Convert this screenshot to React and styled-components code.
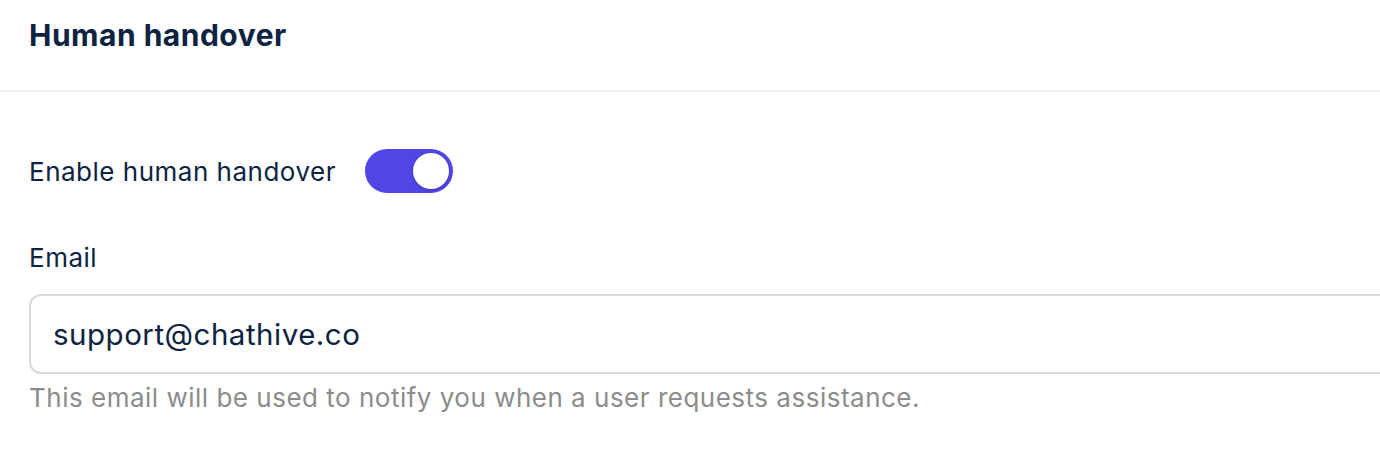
import React, { useState } from "react";
import styled, { createGlobalStyle } from "styled-components";

const Global = createGlobalStyle`
  html, body { margin: 0; padding: 0; background: #ffffff; }
  body { font-family: Inter, "Noto Sans", sans-serif; color: #0c2342; }
  * { box-sizing: border-box; }
`;

const Page = styled.div`
  width: 1380px;
  height: 456px;
  overflow: hidden;
  background: #fff;
`;

const Header = styled.div`
  height: 92px;
  display: flex;
  align-items: center;
  padding: 0 0 20px 29px;
  border-bottom: 2px solid #efefef;
`;

const Title = styled.h1`
  margin: 0;
  font-size: 30px;
  font-weight: 700;
  color: #0c2342;
  letter-spacing: 0.5px;
`;

const Body = styled.div`
  padding: 57px 0 0 29px;
  display: flex;
  flex-direction: column;
`;

const ToggleRow = styled.div`
  display: flex;
  align-items: center;
  gap: 29px;
  height: 44px;
`;

const Label = styled.span`
  font-size: 26px;
  letter-spacing: 0.5px;
  color: #0c2342;
`;

const Switch = styled.button`
  width: 88px;
  height: 44px;
  border-radius: 22px;
  border: none;
  padding: 4px;
  background: ${(p) => (p.$on ? "#5046e6" : "#d5d5dc")};
  display: flex;
  justify-content: ${(p) => (p.$on ? "flex-end" : "flex-start")};
  cursor: pointer;
`;

const Knob = styled.span`
  width: 36px;
  height: 36px;
  border-radius: 50%;
  background: #fff;
  box-shadow: 0 1px 3px rgba(0, 0, 0, 0.25);
`;

const Field = styled.div`
  margin-top: 50px;
  display: flex;
  flex-direction: column;
`;

const FieldLabel = styled.label`
  font-size: 26px;
  letter-spacing: 0.5px;
  color: #0c2342;
  line-height: 30px;
`;

const Input = styled.input`
  margin-top: 21px;
  width: 1400px;
  height: 80px;
  border: 2px solid #dadada;
  border-radius: 12px;
  padding: 0 22px;
  font-family: inherit;
  font-size: 29.5px;
  letter-spacing: 0.5px;
  color: #0c2342;
  outline: none;
  background: #fff;
`;

const Help = styled.p`
  margin: 8px 0 0;
  font-size: 26px;
  letter-spacing: 0.5px;
  color: #8c8c8c;
  line-height: 32px;
`;

export default function App() {
  const [on, setOn] = useState(true);
  return (
    <Page>
      <Global />
      <Header>
        <Title>Human handover</Title>
      </Header>
      <Body>
        <ToggleRow>
          <Label>Enable human handover</Label>
          <Switch $on={on} onClick={() => setOn(!on)} aria-pressed={on}>
            <Knob />
          </Switch>
        </ToggleRow>
        <Field>
          <FieldLabel htmlFor="email">Email</FieldLabel>
          <Input id="email" defaultValue="support@chathive.co" />
          <Help>This email will be used to notify you when a user requests assistance.</Help>
        </Field>
      </Body>
    </Page>
  );
}
